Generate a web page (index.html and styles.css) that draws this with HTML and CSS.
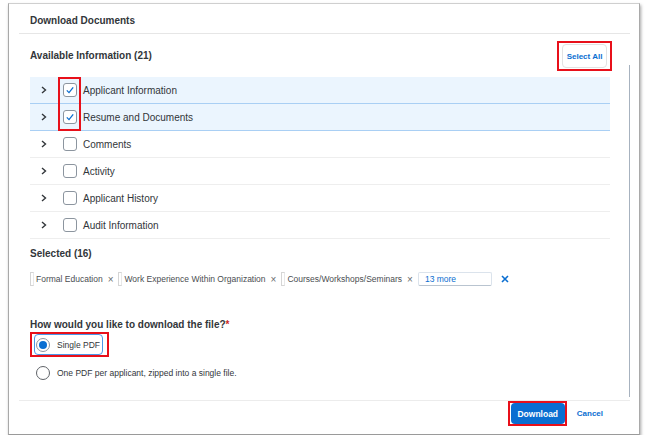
FILE: index.html
```html
<!DOCTYPE html>
<html lang="en">
  <head>
    <meta charset="UTF-8" />
    <meta name="viewport" content="width=device-width, initial-scale=1.0" />
    <title>Download Documents</title>
    <link rel="stylesheet" href="styles.css">
  </head>
  <body>
    <div class="dialog">
      <header class="dialog-header">
        <h1>Download Documents</h1>
      </header>

      <div class="dialog-body">
        <div class="body-main">
          <div class="section-head">
            <h2>Available Information (21)</h2>
            <span class="mark mark-select">
              <button class="btn-ghost">Select All</button>
            </span>
          </div>

          <ul class="tree">
            <li class="tree-row checked">
              <span class="chevron"><svg width="6" height="8" viewBox="0 0 6 8"><polyline points="1,1 4.5,4 1,7" /></svg></span>
              <span class="checkbox"><svg width="12" height="12" viewBox="0 0 12 12"><polyline points="2.8,6.4 5,8.6 9.2,3.4" /></svg></span>
              <span class="row-label">Applicant Information</span>
            </li>
            <li class="tree-row checked">
              <span class="chevron"><svg width="6" height="8" viewBox="0 0 6 8"><polyline points="1,1 4.5,4 1,7" /></svg></span>
              <span class="checkbox"><svg width="12" height="12" viewBox="0 0 12 12"><polyline points="2.8,6.4 5,8.6 9.2,3.4" /></svg></span>
              <span class="row-label">Resume and Documents</span>
            </li>
            <li class="tree-row">
              <span class="chevron"><svg width="6" height="8" viewBox="0 0 6 8"><polyline points="1,1 4.5,4 1,7" /></svg></span>
              <span class="checkbox"></span>
              <span class="row-label">Comments</span>
            </li>
            <li class="tree-row">
              <span class="chevron"><svg width="6" height="8" viewBox="0 0 6 8"><polyline points="1,1 4.5,4 1,7" /></svg></span>
              <span class="checkbox"></span>
              <span class="row-label">Activity</span>
            </li>
            <li class="tree-row">
              <span class="chevron"><svg width="6" height="8" viewBox="0 0 6 8"><polyline points="1,1 4.5,4 1,7" /></svg></span>
              <span class="checkbox"></span>
              <span class="row-label">Applicant History</span>
            </li>
            <li class="tree-row">
              <span class="chevron"><svg width="6" height="8" viewBox="0 0 6 8"><polyline points="1,1 4.5,4 1,7" /></svg></span>
              <span class="checkbox"></span>
              <span class="row-label">Audit Information</span>
            </li>
            <!-- annotation around the two ticked boxes -->
            <li class="mark mark-checks"></li>
          </ul>

          <h2 class="selected-title">Selected (16)</h2>
          <div class="tokens">
            <span class="token"><span class="token-edge"></span>Formal Education<span class="token-x">&times;</span></span>
            <span class="token"><span class="token-edge"></span>Work Experience Within Organization<span class="token-x">&times;</span></span>
            <span class="token"><span class="token-edge"></span>Courses/Workshops/Seminars<span class="token-x">&times;</span></span>
            <span class="more">13 more</span>
            <span class="clear-all"><svg width="8" height="8" viewBox="0 0 8 8"><path d="M1 1 L7 7 M7 1 L1 7" /></svg></span>
          </div>

          <h2 class="question">How would you like to download the file?<span class="req">*</span></h2>
          <div class="radios">
            <span class="mark mark-radio">
              <label class="radio-focus">
                <span class="radio on"></span>
                Single PDF
              </label>
            </span>
            <label class="radio-row">
              <span class="radio"></span>
              One PDF per applicant, zipped into a single file.
            </label>
          </div>
        </div>
        <div class="scrollbar"></div>
      </div>

      <footer class="dialog-footer">
        <span class="mark mark-download">
          <button class="btn-primary">Download</button>
        </span>
        <button class="btn-link">Cancel</button>
      </footer>
    </div>
  </body>
</html>
```

FILE: styles.css
```css
body {
  margin: 0;
  background-color: white;
  font-family: "Liberation Sans", Arial, sans-serif;
  color: #32363a;
}
.dialog {
  margin: 3px 0 0 8px;
  width: 632px;
  height: 432px;
  box-sizing: border-box;
  border: 1px solid #cfcfcf;
  border-left-color: #a9a9a9;
  border-bottom-color: #9a9a9a;
  border-right-color: #a9a9a9;
  box-shadow: 1px 2px 3px rgba(0, 0, 0, 0.35);
  background-color: white;
}
.dialog-header {
  margin: 0 9px 0 10px;
  padding: 4px 0 0 11px;
  height: 25px;
  border-bottom: 1px solid #e6e6e6;
  display: flex;
  align-items: center;
}
h1,
h2 {
  margin: 0;
  font-size: 10px;
  font-weight: bold;
  line-height: 12px;
}
.dialog-body {
  margin: 0 9px 0 10px;
  height: 366px;
  border-bottom: 1px solid #ececec;
  display: flex;
  overflow: hidden;
}
.body-main {
  flex: 1;
  padding: 7px 0 0 11px;
}
.scrollbar {
  width: 1px;
  margin: 31px 0 3px 0;
  background-color: #a7b2bf;
}
.mark {
  border: 2px solid #e8101a;
  box-sizing: border-box;
}
.section-head {
  height: 30px;
  padding-right: 17px;
  display: flex;
  justify-content: space-between;
  align-items: center;
}
.mark-select {
  display: inline-flex;
  padding: 1px 3px;
}
.btn-ghost {
  width: 45px;
  height: 24px;
  padding: 0;
  border: 1px solid #e2e2e2;
  border-radius: 4px;
  background-color: white;
  color: #0a6ed1;
  font-family: inherit;
  font-size: 8px;
  font-weight: bold;
}
.tree {
  position: relative;
  list-style: none;
  margin: 6px 19px 0 0;
  padding: 0;
}
.tree-row {
  height: 26px;
  border-bottom: 1px solid #eeeeee;
  display: flex;
  align-items: center;
  font-size: 10px;
}
.tree-row.checked {
  background-color: #ebf5fe;
  border-bottom-color: #a9cff4;
}
.chevron {
  width: 27px;
  display: flex;
  justify-content: center;
}
.chevron polyline {
  fill: none;
  stroke: #32363a;
  stroke-width: 1.4;
}
.checkbox {
  width: 14px;
  height: 14px;
  margin-left: 6px;
  box-sizing: border-box;
  border: 1px solid #8c959f;
  border-radius: 3px;
  background-color: white;
  display: flex;
  align-items: center;
  justify-content: center;
}
.checkbox polyline {
  fill: none;
  stroke: #0a6ed1;
  stroke-width: 1.3;
}
.row-label {
  margin-left: 6px;
}
.mark-checks {
  position: absolute;
  top: 0;
  left: 28px;
  width: 23px;
  height: 54px;
}
.selected-title {
  margin-top: 9px;
}
.tokens {
  margin-top: 12px;
  height: 14px;
  display: flex;
  align-items: center;
  font-size: 8.5px;
  color: #4a4d51;
}
.token {
  display: inline-flex;
  align-items: center;
  margin-right: 5px;
}
.token-edge {
  width: 2px;
  height: 12px;
  margin-right: 2px;
  border: 1px solid #d5d5d5;
  border-right-color: #e8e8e8;
}
.token-x {
  margin-left: 5px;
  font-size: 10px;
  color: #6a6d70;
}
.more {
  width: 74px;
  height: 14px;
  box-sizing: border-box;
  padding-left: 6px;
  border: 1px solid #dbe3ec;
  border-bottom-color: #b9c4d0;
  border-radius: 2px;
  color: #0a6ed1;
  line-height: 12px;
}
.clear-all {
  margin-left: 9px;
  display: flex;
}
.clear-all path {
  stroke: #0a6ed1;
  stroke-width: 1.6;
}
.question {
  margin-top: 33px;
}
.req {
  color: #d0271d;
}
.radios {
  margin-top: 1px;
  font-size: 8.5px;
}
.mark-radio {
  display: inline-flex;
  padding: 0 4px 0 2px;
  height: 25px;
}
.radio-focus {
  height: 21px;
  box-sizing: border-box;
  padding: 0 2px 0 1px;
  border: 1px solid #4b97e8;
  border-radius: 4px;
  display: flex;
  align-items: center;
  gap: 7px;
}
.radio-row {
  margin-top: 6px;
  height: 20px;
  padding-left: 6px;
  display: flex;
  align-items: center;
  gap: 7px;
}
.radio {
  width: 14px;
  height: 14px;
  box-sizing: border-box;
  border: 1px solid #5f6368;
  border-radius: 50%;
  background-color: white;
  display: flex;
  align-items: center;
  justify-content: center;
}
.radio.on {
  border-color: #8c959f;
}
.radio.on::after {
  content: "";
  width: 8px;
  height: 8px;
  border-radius: 50%;
  background-color: #0a6ed1;
}
.dialog-footer {
  padding-right: 28px;
  display: flex;
  justify-content: flex-end;
  align-items: flex-start;
}
.mark-download {
  display: inline-flex;
  padding: 0 0 0 1px;
}
.btn-primary {
  width: 54px;
  height: 21px;
  padding: 0;
  border: none;
  border-radius: 4px;
  background-color: #0a6ed1;
  color: white;
  font-family: inherit;
  font-size: 8.5px;
  font-weight: bold;
}
.btn-link {
  height: 25px;
  margin-left: 2px;
  padding: 0 8px;
  border: none;
  background: none;
  color: #0a6ed1;
  font-family: inherit;
  font-size: 8px;
  font-weight: bold;
}
```
